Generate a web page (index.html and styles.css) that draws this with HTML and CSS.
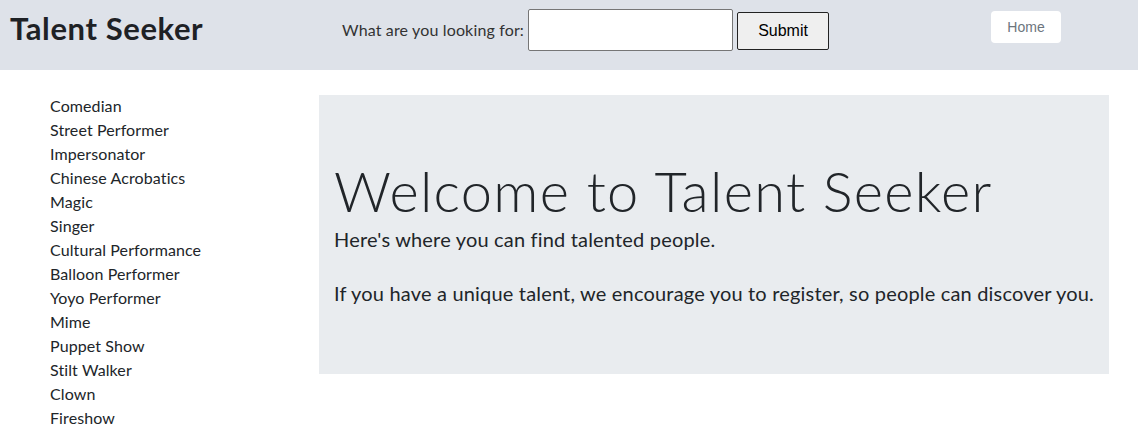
FILE: index.html
```html
<!DOCTYPE html>
<html lang="en">
<head>
<meta charset="utf-8">
<title>Talent Seeker</title>
<link rel="stylesheet" href="styles.css">
</head>
<body>
<header class="topbar">
  <div class="brand">Talent Seeker</div>
  <form class="search">
    <label class="search-label" for="q">What are you looking for:</label>
    <input class="search-input" id="q" type="text">
    <button class="search-btn" type="button">Submit</button>
  </form>
  <a class="home-btn" href="#">Home</a>
</header>
<main class="page">
  <ul class="categories">
    <li>Comedian</li>
    <li>Street Performer</li>
    <li>Impersonator</li>
    <li>Chinese Acrobatics</li>
    <li>Magic</li>
    <li>Singer</li>
    <li>Cultural Performance</li>
    <li>Balloon Performer</li>
    <li>Yoyo Performer</li>
    <li>Mime</li>
    <li>Puppet Show</li>
    <li>Stilt Walker</li>
    <li>Clown</li>
    <li>Fireshow</li>
  </ul>
  <section class="jumbotron">
    <h1 class="display">Welcome to Talent Seeker</h1>
    <p class="lead">Here's where you can find talented people.</p>
    <p class="lead">If you have a unique talent, we encourage you to register, so people can discover you.</p>
  </section>
</main>
</body>
</html>
```
FILE: styles.css
```css
html, body {
  margin: 0;
  padding: 0;
}
body {
  font-family: "Lato", "Noto Sans", sans-serif;
  color: #212529;
  background: #fff;
  font-size: 16px;
  line-height: 1.5;
}
.topbar {
  display: flex;
  align-items: center;
  height: 70px;
  background: #dee2e9;
  box-sizing: border-box;
}
.brand {
  font-family: "Lato", sans-serif;
  font-weight: bold;
  font-size: 31px;
  margin-left: 10px;
  width: 332px;
  margin-top: -14px;
  color: #1e2125;
  letter-spacing: 0.6px;
}
.search {
  display: flex;
  align-items: center;
  margin-top: -10px;
}
.search-label {
  font-size: 16px;
  color: #333;
  margin-right: 4px;
  letter-spacing: 0.15px;
}
.search-input {
  width: 205px;
  height: 42px;
  box-sizing: border-box;
  border: 1px solid #767676;
  border-radius: 2px;
  background: #fff;
  margin: 0 4px 0 0;
}
.search-btn {
  width: 92px;
  height: 38px;
  box-sizing: border-box;
  border: 1px solid #222;
  border-radius: 2px;
  background: #efefef;
  font-family: "Liberation Sans", Arial, sans-serif;
  font-size: 16px;
  color: #000;
  margin-top: 2px;
}
.home-btn {
  margin-left: 162px;
  margin-top: -16px;
  width: 70px;
  height: 32px;
  box-sizing: border-box;
  display: flex;
  align-items: center;
  justify-content: center;
  background: #fff;
  border-radius: 4px;
  color: #6c757d;
  font-family: "Liberation Sans", Arial, sans-serif;
  font-size: 14px;
  text-decoration: none;
}
.page {
  display: flex;
  align-items: flex-start;
  padding-top: 25px;
}
.categories {
  list-style: none;
  margin: 0;
  padding: 0 0 0 50px;
  width: 319px;
  flex-shrink: 0;
  box-sizing: border-box;
  font-size: 16px;
  line-height: 24px;
  color: #212529;
  margin-top: -1px;
  letter-spacing: 0.1px;
}
.jumbotron {
  width: 790px;
  flex-shrink: 0;
  background: #e9ecef;
  padding: 62px 8px 66px 15px;
  box-sizing: border-box;
}
.display {
  font-size: 56px;
  font-weight: 300;
  line-height: 67px;
  margin: 0;
  letter-spacing: 1.3px;
}
.lead {
  font-size: 20px;
  line-height: 30px;
  margin: 0 0 24px;
  letter-spacing: 0.18px;
}
.lead:last-child {
  margin-bottom: 0;
}
```
